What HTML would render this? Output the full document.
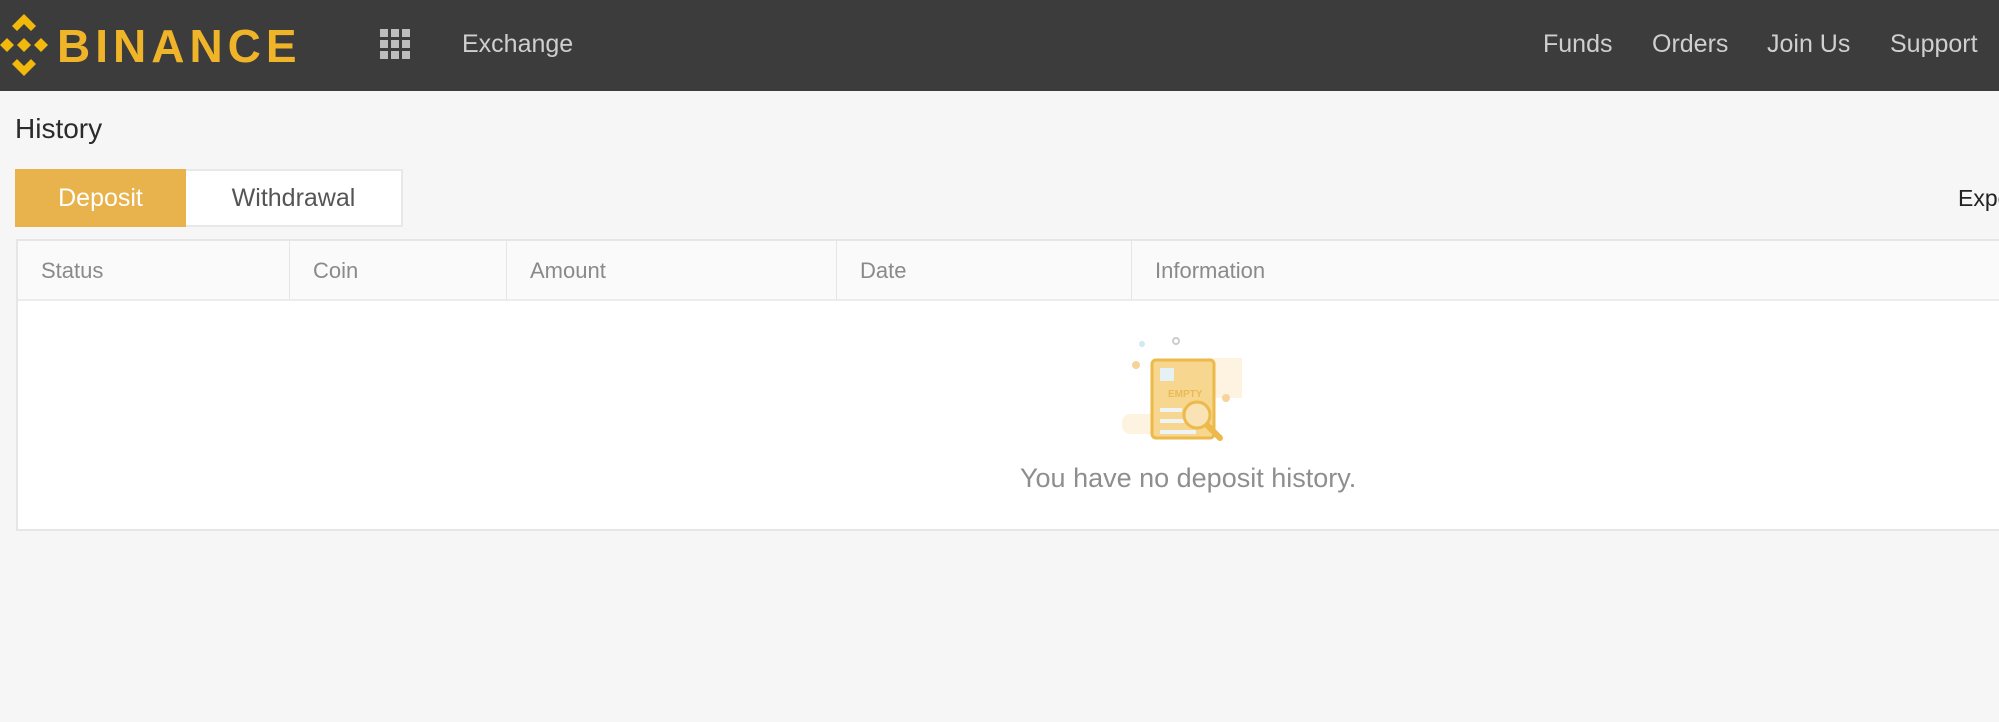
<!DOCTYPE html>
<html><head><meta charset="utf-8"><style>
*{margin:0;padding:0;box-sizing:border-box}
body{width:1999px;height:722px;overflow:hidden;background:#f6f6f6;font-family:"Liberation Sans",Arial,sans-serif;position:relative}
.hdr{position:absolute;left:0;top:0;width:1999px;height:91px;background:#3c3c3c}
.abs{position:absolute;white-space:nowrap}
.nav{color:#cfcfcf;font-size:25px;top:30px}
.th{position:absolute;top:0;height:59px;line-height:59px;color:#8a8a8a;font-size:22px;padding-left:23px;border-right:1px solid #e6e6e6}
</style></head><body>
<div class="hdr">
  <svg class="abs" style="left:0;top:14px" width="48" height="62" viewBox="0 0 48 62">
    <g fill="#f0b90b">
      <polygon points="24,0 36,12 31,17 24,10 17,17 12,12"/>
      <polygon points="24,62 36,50 31,45 24,52 17,45 12,50"/>
      <polygon points="7,24 14,31 7,38 0,31"/>
      <polygon points="41,24 48,31 41,38 34,31"/>
      <polygon points="24,24 31,31 24,38 17,31"/>
    </g>
  </svg>
  <div class="abs" style="left:57px;top:19px;font-size:46px;font-weight:bold;color:#f0b429;letter-spacing:5px">BINANCE</div>
  <svg class="abs" style="left:380px;top:29px" width="31" height="31" viewBox="0 0 31 31" fill="#bdbdbd">
    <rect x="0" y="0" width="8" height="8"/><rect x="11" y="0" width="8" height="8"/><rect x="22" y="0" width="8" height="8"/>
    <rect x="0" y="11" width="8" height="8"/><rect x="11" y="11" width="8" height="8"/><rect x="22" y="11" width="8" height="8"/>
    <rect x="0" y="22" width="8" height="8"/><rect x="11" y="22" width="8" height="8"/><rect x="22" y="22" width="8" height="8"/>
  </svg>
  <div class="abs nav" style="left:462px">Exchange</div>
  <div class="abs nav" style="left:1543px">Funds</div>
  <div class="abs nav" style="left:1652px">Orders</div>
  <div class="abs nav" style="left:1767px">Join Us</div>
  <div class="abs nav" style="left:1890px">Support</div>
</div>
<div class="abs" style="left:15px;top:113px;font-size:28px;color:#2b2b2b">History</div>
<div class="abs" style="left:15px;top:169px;width:171px;height:58px;background:#e8b24c;color:#fff;font-size:25px;line-height:58px;text-align:center">Deposit</div>
<div class="abs" style="left:186px;top:169px;width:217px;height:58px;background:#fff;border:2px solid #e8e8e8;border-left:none;color:#555;font-size:25px;line-height:54px;text-align:center">Withdrawal</div>
<div class="abs" style="left:1958px;top:185px;font-size:23px;color:#222">Export</div>
<div class="abs" style="left:16px;top:239px;width:2100px;height:292px;background:#fff;border:2px solid #e6e6e6">
  <div style="position:absolute;left:0;top:0;width:100%;height:60px;background:#fafafa;border-bottom:2px solid #ececec">
    <div class="th" style="left:0;width:272px">Status</div>
    <div class="th" style="left:272px;width:217px">Coin</div>
    <div class="th" style="left:489px;width:330px">Amount</div>
    <div class="th" style="left:819px;width:295px">Date</div>
    <div class="th" style="left:1114px;width:600px;border-right:none">Information</div>
  </div>
  <svg style="position:absolute;left:1104px;top:95px" width="120" height="110" viewBox="0 0 120 110">
    <rect x="85" y="22" width="36" height="40" fill="#fdf3e0"/>
    <rect x="0" y="78" width="40" height="20" rx="8" fill="#fdf3e0"/>
    <circle cx="20" cy="8" r="3" fill="#cfe9f5"/>
    <circle cx="54" cy="5" r="3" fill="none" stroke="#ccc" stroke-width="2"/>
    <circle cx="14" cy="29" r="4" fill="#f5d49a"/>
    <circle cx="104" cy="62" r="4" fill="#f5d49a"/>
    <rect x="30" y="24" width="62" height="78" rx="4" fill="#f7d78f" stroke="#ecb94a" stroke-width="3"/>
    <rect x="38" y="32" width="14" height="13" fill="#e6f1f6"/>
    <text x="46" y="61" font-size="10" font-family="Liberation Sans" font-weight="bold" fill="#e9bb55">EMPTY</text>
    <rect x="38" y="72" width="22" height="4" fill="#eef4f6"/>
    <rect x="38" y="83" width="28" height="4" fill="#eef4f6"/>
    <rect x="38" y="94" width="36" height="4" fill="#eef4f6"/>
    <line x1="84" y1="88" x2="98" y2="102" stroke="#ecb94a" stroke-width="6" stroke-linecap="round"/>
    <circle cx="75" cy="79" r="13" fill="#f9e3b5" stroke="#ecb94a" stroke-width="3"/>
  </svg>
  <div style="position:absolute;left:1002px;top:222px;font-size:27px;color:#8e8e8e;white-space:nowrap">You have no deposit history.</div>
</div>
</body></html>
